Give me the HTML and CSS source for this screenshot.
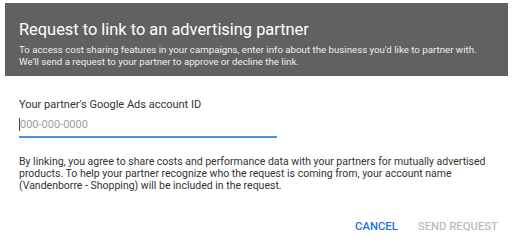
FILE: index.html
```html
<!DOCTYPE html>
<html lang="en">
<head>
<meta charset="UTF-8">
<meta name="viewport" content="width=device-width, initial-scale=1.0">
<link rel="stylesheet" href="styles.css">
<title>Request to link to an advertising partner</title>
</head>
<body>
<div class="dialog">
    <div class="dialog-header">
        <h1>Request to link to an advertising partner</h1>
        <p>To access cost sharing features in your campaigns, enter info about the business you'd like to partner with.<br>We'll send a request to your partner to approve or decline the link.</p>
    </div>
    <div class="dialog-body">
        <div class="field">
            <label for="accountId">Your partner's Google Ads account ID</label>
            <div class="input-wrap">
                <input type="text" id="accountId" placeholder="000-000-0000">
            </div>
        </div>
        <p class="notice">By linking, you agree to share costs and performance data with your partners for mutually advertised products. To help your partner recognize who the request is coming from, your account name (Vandenborre - Shopping) will be included in the request.</p>
    </div>
    <div class="buttons">
        <button class="cancel-btn">CANCEL</button>
        <button class="send-btn" disabled>SEND REQUEST</button>
    </div>
</div>
</body>
</html>
```

FILE: styles.css
```css
body {
    font-family: Roboto, "Liberation Sans", Arial, sans-serif;
    margin: 0;
    padding: 0;
    background-color: #ffffff;
}

.dialog {
    width: 503px;
    margin: 3px 5px 0;
}

.dialog-header {
    background-color: #616161;
    color: #ffffff;
    padding: 17px 14px 11px;
    height: 45px;
}

.dialog-header h1 {
    font-size: 16.4px;
    font-weight: 400;
    line-height: 20px;
    margin: 0 0 4px;
}

.dialog-header p {
    font-size: 9.7px;
    line-height: 11.5px;
    margin: 0;
    color: #eeeeee;
}

.dialog-body {
    padding: 22px 14px 0;
}

.field {
    display: flex;
    flex-direction: column;
    width: 258px;
}

.field label {
    font-size: 11px;
    line-height: 14px;
    color: #333333;
}

.input-wrap {
    margin-top: 1px;
    padding: 5px 0 5px;
    border-bottom: 2px solid #4a90e2;
    display: flex;
}

.input-wrap input {
    flex: 1;
    font-family: inherit;
    font-size: 11px;
    line-height: 13px;
    height: 13px;
    color: #333333;
    border: none;
    border-left: 1px solid #444444;
    padding: 0;
    outline: none;
}

.input-wrap input::placeholder {
    color: #9e9e9e;
}

.notice {
    font-size: 10.5px;
    line-height: 12px;
    color: #333333;
    margin: 18px 0 0;
}

.buttons {
    display: flex;
    justify-content: flex-end;
    gap: 20px;
    padding: 28px 10px 0;
}

.buttons button {
    font-family: inherit;
    font-size: 11.3px;
    font-weight: 500;
    border: none;
    background: none;
    padding: 0;
    cursor: pointer;
}

.cancel-btn {
    color: #1a73e8;
}

.send-btn {
    color: #bdbdbd;
}
```
